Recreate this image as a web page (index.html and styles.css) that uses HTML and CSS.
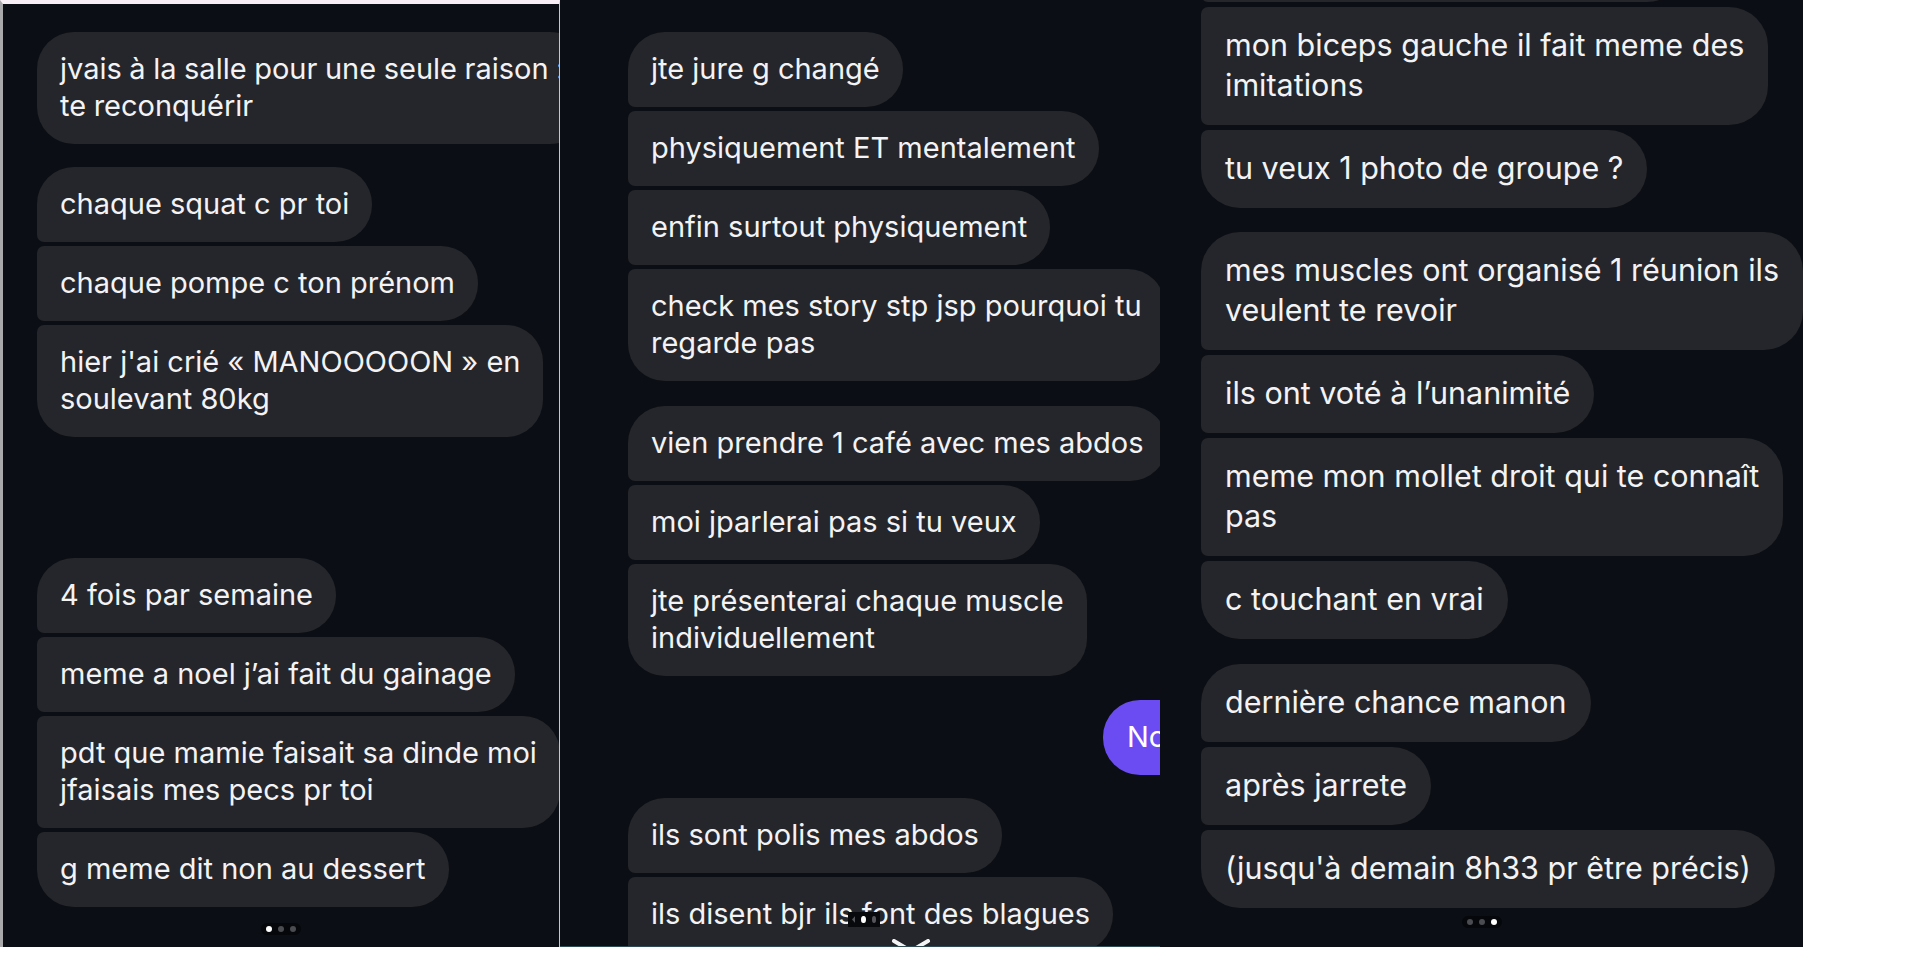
FILE: index.html
```html
<!DOCTYPE html>
<html lang="fr">
<head>
    <meta charset="UTF-8">
    <meta name="viewport" content="width=device-width, initial-scale=1.0">
    <title>Messages</title>
    <link rel="stylesheet" href="styles.css">
</head>
<body>
    <div class="board">
        <section class="shot shot-a">
            <div class="msg tight">jvais à la salle pour une seule raison :<br>te reconquérir</div>
            <div class="msg top group">chaque squat c pr toi</div>
            <div class="msg mid">chaque pompe c ton prénom</div>
            <div class="msg end">hier j'ai crié « MANOOOOON » en<br>soulevant 80kg</div>
            <div class="msg top far">4 fois par semaine</div>
            <div class="msg mid">meme a noel j’ai fait du gainage</div>
            <div class="msg mid">pdt que mamie faisait sa dinde moi<br>jfaisais mes pecs pr toi</div>
            <div class="msg end">g meme dit non au dessert</div>
            <div class="dots dots-a"><span class="on"></span><span></span><span></span></div>
        </section>

        <section class="shot shot-b">
            <div class="msg top">jte jure g changé</div>
            <div class="msg mid">physiquement ET mentalement</div>
            <div class="msg mid">enfin surtout physiquement</div>
            <div class="msg end">check mes story stp jsp pourquoi tu<br>regarde pas</div>
            <div class="msg top group">vien prendre 1 café avec mes abdos</div>
            <div class="msg mid">moi jparlerai pas si tu veux</div>
            <div class="msg end">jte présenterai chaque muscle<br>individuellement</div>
            <div class="msg mine">Non</div>
            <div class="msg top group">ils sont polis mes abdos</div>
            <div class="msg mid">ils disent bjr ils font des blagues</div>

            <!-- carousel controls drawn over the last bubble -->
            <div class="pager"><i class="pager-prev"></i><span class="on"></span><span></span></div>
            <svg class="chevron" width="40" height="14" viewBox="0 0 40 14">
                <polyline points="3,2 20,12 37,2" fill="none" stroke="#f4f4f5" stroke-width="4" stroke-linecap="round"/>
            </svg>
        </section>

        <section class="shot shot-c">
            <div class="msg mid sliver"></div>
            <div class="msg mid">mon biceps gauche il fait meme des<br>imitations</div>
            <div class="msg end">tu veux 1 photo de groupe ?</div>
            <div class="msg top group">mes muscles ont organisé 1 réunion ils<br>veulent te revoir</div>
            <div class="msg mid">ils ont voté à l’unanimité</div>
            <div class="msg mid">meme mon mollet droit qui te connaît<br>pas</div>
            <div class="msg end">c touchant en vrai</div>
            <div class="msg top group">dernière chance manon</div>
            <div class="msg mid">après jarrete</div>
            <div class="msg end">(jusqu'à demain 8h33 pr être précis)</div>
            <div class="dots dots-c"><span></span><span></span><span class="on"></span></div>
        </section>
    </div>
</body>
</html>
```

FILE: styles.css
```css
* {
    box-sizing: border-box;
}
body {
    margin: 0;
    background: #ffffff;
    font-family: Inter, "Noto Sans", sans-serif;
}
.board {
    display: flex;
    height: 947px;
}
.shot {
    position: relative;
    display: flex;
    flex-direction: column;
    align-items: flex-start;
    gap: 4px;
    height: 100%;
    overflow: hidden;
    background: #0b0e14;
}
.shot-a {
    width: 560px;
    padding: 28px 0 0 34px;
    border-left: 3px solid #a9a9ab;
    border-top: 4px solid #f8eef5;
    border-right: 1px solid #c4c7cb;
}
.shot-b {
    width: 600px;
    padding: 32px 0 0 68px;
    border-bottom: 1px solid #2e4b53;
}
.shot-c {
    width: 643px;
    padding: 0 0 0 41px;
    gap: 5px;
}

/* bubbles */
.msg {
    flex-shrink: 0;
    padding: 18px 23px 20px;
    border-radius: 37px;
    background: #25262b;
    color: #f3f3f5;
    font-size: 29px;
    line-height: 37px;
    white-space: nowrap;
}
.msg.tight {
    word-spacing: -0.6px;
}
.msg.top {
    border-bottom-left-radius: 7px;
}
.msg.mid {
    border-top-left-radius: 7px;
    border-bottom-left-radius: 7px;
}
.msg.end {
    border-top-left-radius: 7px;
}
.shot-a .group {
    margin-top: 19px;
}
.shot-a .far {
    margin-top: 117px;
}
.shot-b .group {
    margin-top: 19px;
}
.shot-b .msg:nth-child(5) {
    margin-top: 21px;
}
.msg.mine {
    margin: 20px 0 0 475px;
    padding: 18px 24px 20px;
    background: #6b4cf2;
    color: #ffffff;
}
.shot-c .msg {
    padding: 18px 24px 20px;
    border-radius: 39px;
    font-size: 30.5px;
    line-height: 40px;
}
.shot-c .msg.top {
    border-bottom-left-radius: 7px;
}
.shot-c .msg.mid {
    border-top-left-radius: 7px;
    border-bottom-left-radius: 7px;
}
.shot-c .msg.end {
    border-top-left-radius: 7px;
}
.shot-c .group {
    margin-top: 19px;
}
.shot-c .msg:nth-child(8) {
    margin-top: 20px;
}
.shot-c .sliver {
    width: 485px;
    height: 78px;
    margin-top: -76px;
}

/* carousel dots */
.dots {
    align-self: center;
    display: flex;
    gap: 6px;
    padding: 3px 5px;
    border-radius: 6px;
    background: #05070a;
}
.dots span {
    width: 6px;
    height: 6px;
    border-radius: 50%;
    background: #4b4c52;
}
.dots span.on {
    background: #ffffff;
}
.dots-a {
    margin-top: 12px;
    margin-left: -34px;
}
.dots-c {
    margin-top: 3px;
    margin-left: -41px;
}
.pager {
    position: absolute;
    left: 288px;
    top: 912px;
    display: flex;
    align-items: center;
    gap: 6px;
    width: 32px;
    height: 15px;
    padding: 0 4px;
    background: #08090c;
}
.pager span {
    width: 7px;
    height: 7px;
    border-radius: 50%;
    background: #55565c;
}
.pager span.on {
    background: #ffffff;
}
.pager-prev {
    width: 5px;
    height: 7px;
    background: #55565c;
    clip-path: polygon(100% 0, 0 50%, 100% 100%);
}
.chevron {
    position: absolute;
    left: 331px;
    top: 939px;
}
```
